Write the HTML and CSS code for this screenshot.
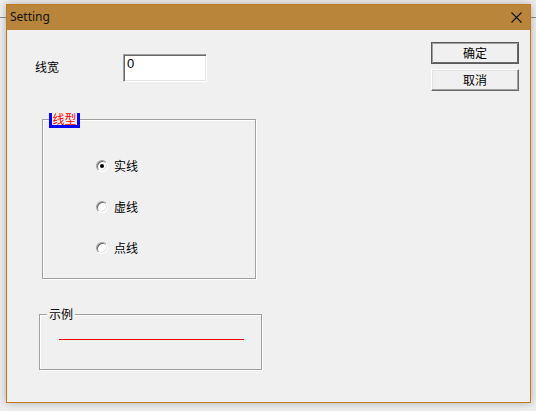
FILE: index.html
```html
<!DOCTYPE html>
<html lang="zh">
<head>
<meta charset="utf-8">
<title>Setting</title>
<link rel="stylesheet" href="styles.css">
</head>
<body>
<div class="window">
  <div class="titlebar">
    <span class="title">Setting</span>
    <svg class="close" width="11" height="11" viewBox="0 0 11 11" aria-hidden="true">
      <path d="M0.5 0.5 L10.5 10.5 M10.5 0.5 L0.5 10.5" stroke="#111" stroke-width="1.1" fill="none"/>
    </svg>
  </div>
  <div class="client">
    <div class="left">
      <div class="width-row">
        <span class="label">线宽</span>
        <div class="edit">0</div>
      </div>
      <div class="group group-type">
        <span class="legend legend-focus">线型</span>
        <div class="radio-row"><span class="radio checked"></span><span class="rlabel">实线</span></div>
        <div class="radio-row"><span class="radio"></span><span class="rlabel">虚线</span></div>
        <div class="radio-row"><span class="radio"></span><span class="rlabel">点线</span></div>
      </div>
      <div class="group group-sample">
        <span class="legend legend-plain">示例</span>
        <div class="sample-line"></div>
      </div>
    </div>
    <div class="buttons">
      <div class="btn btn-default">确定</div>
      <div class="btn">取消</div>
    </div>
  </div>
</div>
</body>
</html>
```

FILE: styles.css
```css
html, body {
  margin: 0;
  height: 100%;
}
body {
  padding: 4px 0 0 6px;
  box-sizing: border-box;
  background: linear-gradient(#8c8c8c, #8c8c8c) 0 17px / 100% 1px no-repeat, #eeeeee;
  font-family: "Noto Sans CJK SC", "Noto Sans", sans-serif;
  font-size: 12px;
  color: #000;
  overflow: hidden;
}
.window {
  width: 525px;
  height: 399px;
  box-sizing: border-box;
  border: 1px solid #c27a1e;
  box-shadow: 0 0 8px rgba(0, 0, 0, 0.28);
  display: flex;
  flex-direction: column;
  background: #f0f0f0;
}
.titlebar {
  height: 25px;
  flex: none;
  background: #b9853b;
  display: flex;
  align-items: center;
  padding-left: 3px;
}
.title {
  font-family: "Noto Sans", "Open Sans", sans-serif;
  font-size: 12px;
  color: #141414;
  line-height: 14px;
  margin-top: -1px;
}
.close {
  margin-left: auto;
  margin-right: 8px;
  margin-top: 0px;
  display: block;
}
.client {
  flex: 1;
  display: flex;
  background: #f0f0f0;
}
.left {
  display: flex;
  flex-direction: column;
  align-items: flex-start;
}
.width-row {
  margin-top: 24px;
  margin-left: 28px;
  display: flex;
  align-items: center;
}
.label {
  width: 88px;
  line-height: 14px;
  margin-top: -2px;
}
.edit {
  width: 84px;
  height: 28px;
  box-sizing: border-box;
  background: #fff;
  border: 1px solid;
  border-color: #a0a0a0 #ffffff #ffffff #a0a0a0;
  box-shadow: inset 1px 1px 0 #696969, inset -1px -1px 0 #e3e3e3;
  font-family: "Liberation Sans", sans-serif;
  font-size: 13px;
  line-height: 14px;
  padding: 2px 0 0 3px;
}
.group {
  position: relative;
  box-sizing: border-box;
  border: 1px solid #a0a0a0;
  box-shadow: 1px 1px 0 #ffffff, inset 1px 1px 0 #ffffff;
}
.group-type {
  margin-top: 37px;
  margin-left: 35px;
  width: 214px;
  height: 160px;
  padding: 39px 0 0 53px;
  display: flex;
  flex-direction: column;
  gap: 27px;
}
.legend {
  position: absolute;
  line-height: 12px;
  font-size: 12px;
}
.legend-focus {
  left: 6px;
  top: -7px;
  width: 25px;
  height: 12px;
  border: 3px solid #0000ff;
  border-top: none;
  background: #f0f0f0;
  color: #ff0000;
  text-align: center;
  white-space: nowrap;
}
.legend-plain {
  left: 7px;
  top: -7px;
  padding: 0 2px 0 2px;
  background: #f0f0f0;
}
.radio-row {
  display: flex;
  align-items: center;
  height: 14px;
}
.radio {
  width: 12px;
  height: 12px;
  box-sizing: border-box;
  border-radius: 50%;
  border: 1px solid;
  border-color: #a0a0a0 #ffffff #ffffff #a0a0a0;
  box-shadow: inset 1px 1px 0 #696969, inset -1px -1px 0 #e3e3e3;
  background: #fff;
  display: flex;
  align-items: center;
  justify-content: center;
}
.radio.checked::after {
  content: "";
  width: 4px;
  height: 4px;
  border-radius: 50%;
  background: #000;
}
.rlabel {
  margin-left: 6px;
  line-height: 14px;
}
.group-sample {
  margin-top: 35px;
  margin-left: 32px;
  width: 223px;
  height: 56px;
  padding: 24px 0 0 19px;
}
.sample-line {
  width: 185px;
  height: 1px;
  background: #ee0000;
}
.buttons {
  margin-left: auto;
  margin-right: 11px;
  margin-top: 12px;
  display: flex;
  flex-direction: column;
  gap: 5px;
}
.btn {
  width: 88px;
  height: 22px;
  box-sizing: border-box;
  display: flex;
  align-items: center;
  justify-content: center;
  background: #f0f0f0;
  border: 1px solid;
  border-color: #ffffff #696969 #696969 #ffffff;
  box-shadow: inset -1px -1px 0 #a0a0a0, inset 1px 1px 0 #e3e3e3;
  line-height: 14px;
}
.btn-default {
  border-color: #5a5a5a;
  box-shadow: inset 1px 1px 0 #a0a0a0, inset -1px -1px 0 #696969;
}
```
